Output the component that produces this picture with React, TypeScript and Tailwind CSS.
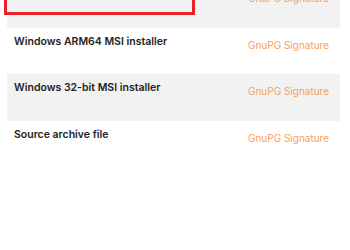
const rows = [
  { name: 'Windows 64-bit MSI installer', shaded: true, marked: true },
  { name: 'Windows ARM64 MSI installer', shaded: false },
  { name: 'Windows 32-bit MSI installer', shaded: true },
  { name: 'Source archive file', shaded: false },
];

export default function App() {
  return (
    <div
      className="w-[350px] h-[250px] overflow-hidden bg-white"
      style={{ fontFamily: 'Inter, "Liberation Sans", sans-serif' }}
    >
      <div className="ml-[7px] w-[333px] mt-[-19px]">
        {rows.map((row) => (
          <div
            key={row.name}
            className={`relative flex h-[46.5px] px-[7px] pt-[6px] ${row.shaded ? 'bg-[#f2f2f2]' : 'bg-white'}`}
          >
            <div className="w-[234px] shrink-0 whitespace-nowrap text-[10.5px] leading-[16px] font-semibold text-[#222]">
              {row.name}
            </div>
            <a className="mt-[3px] whitespace-nowrap text-[10px] leading-[16px] text-[#f5a05a]">GnuPG Signature</a>
            {row.marked && (
              <div className="absolute left-[-3px] top-[-12px] w-[191px] h-[46px] border-[3px] border-[#e8202a]" />
            )}
          </div>
        ))}
      </div>
    </div>
  );
}
